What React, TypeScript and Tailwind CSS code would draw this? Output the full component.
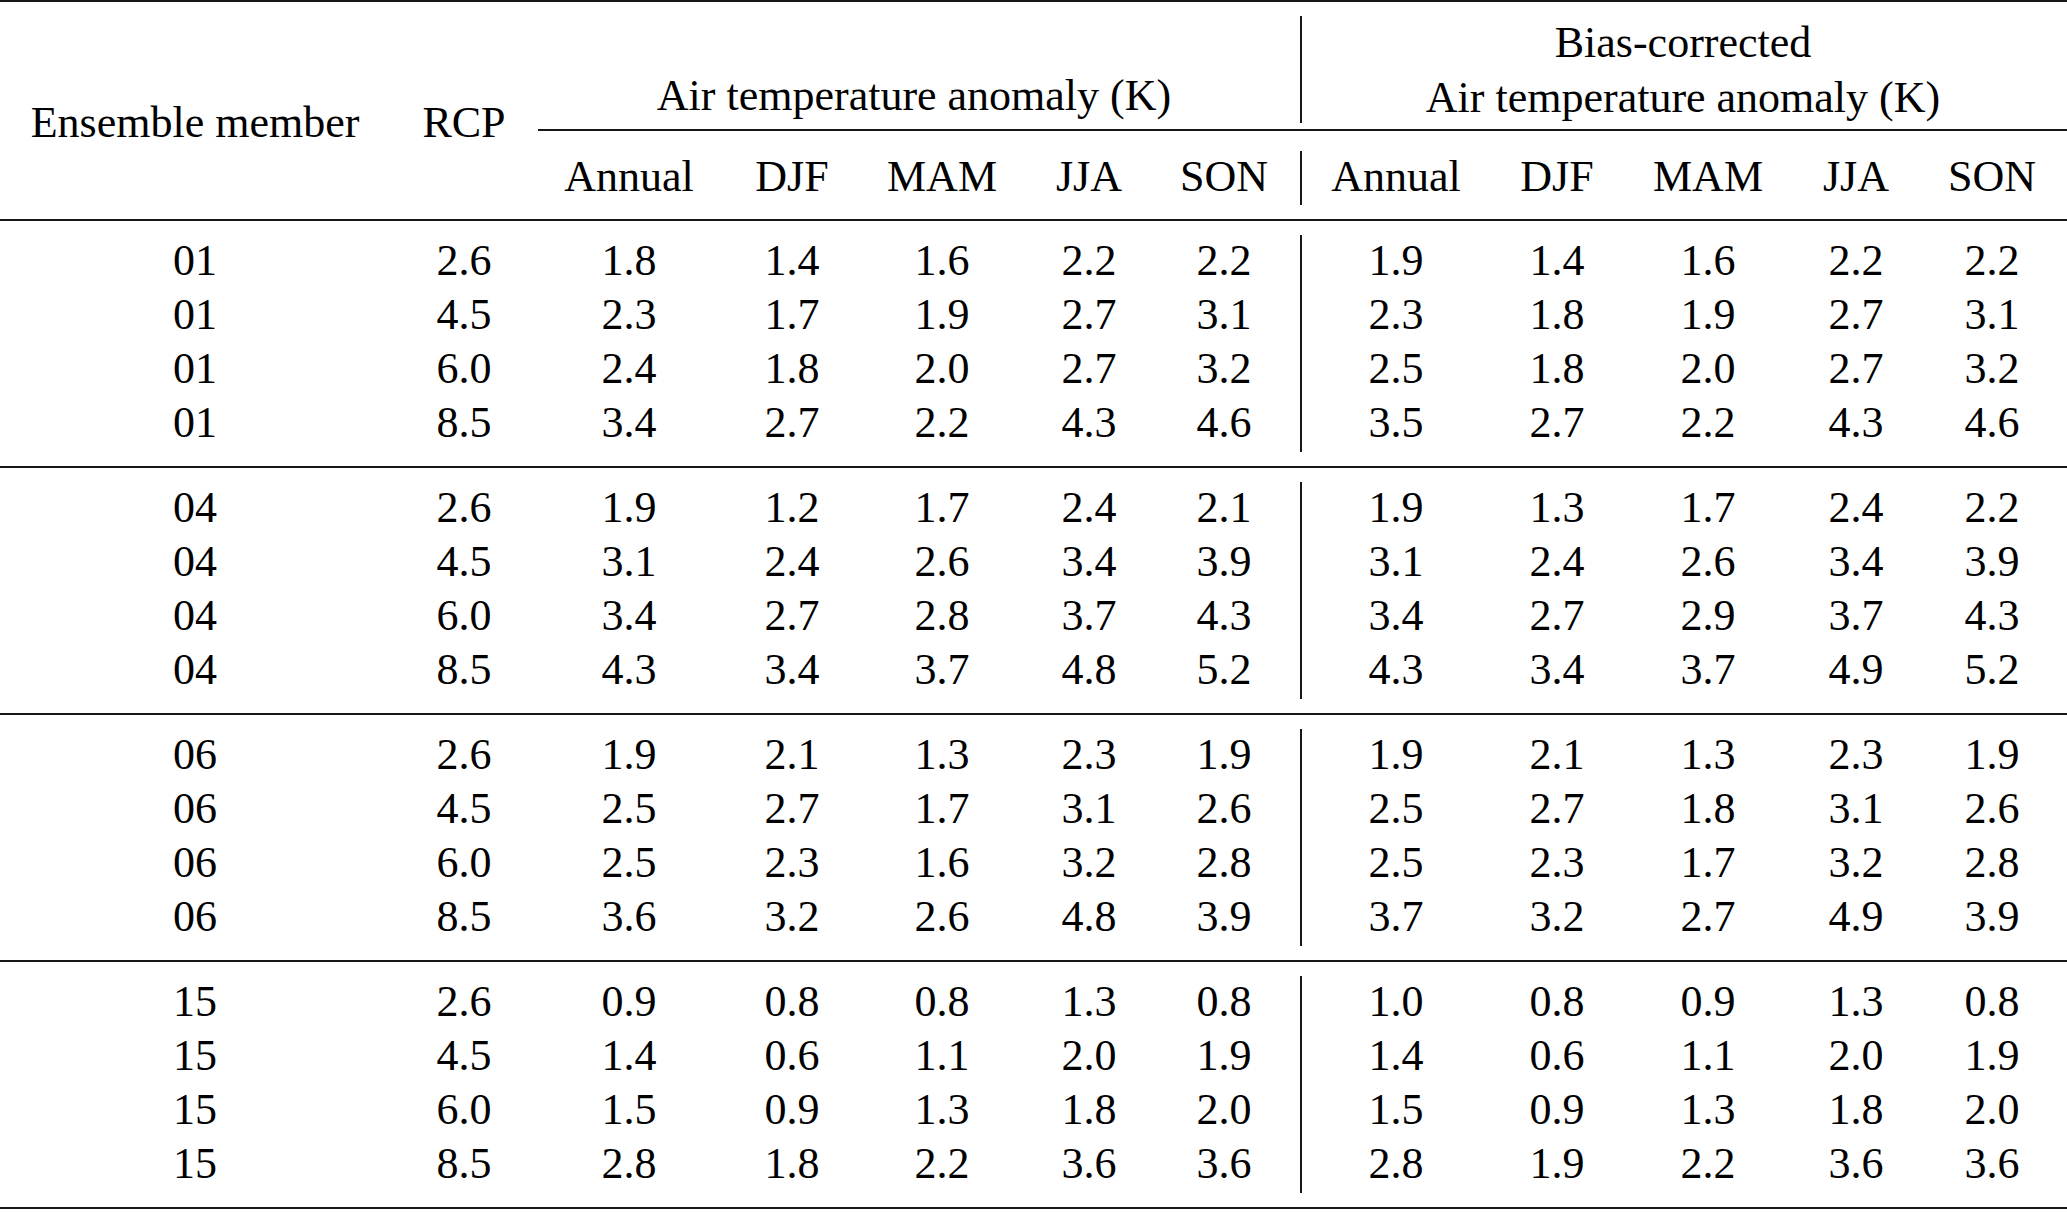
const groups = [
  {
    member: "01",
    rows: [
      ["2.6", "1.8", "1.4", "1.6", "2.2", "2.2", "1.9", "1.4", "1.6", "2.2", "2.2"],
      ["4.5", "2.3", "1.7", "1.9", "2.7", "3.1", "2.3", "1.8", "1.9", "2.7", "3.1"],
      ["6.0", "2.4", "1.8", "2.0", "2.7", "3.2", "2.5", "1.8", "2.0", "2.7", "3.2"],
      ["8.5", "3.4", "2.7", "2.2", "4.3", "4.6", "3.5", "2.7", "2.2", "4.3", "4.6"],
    ],
  },
  {
    member: "04",
    rows: [
      ["2.6", "1.9", "1.2", "1.7", "2.4", "2.1", "1.9", "1.3", "1.7", "2.4", "2.2"],
      ["4.5", "3.1", "2.4", "2.6", "3.4", "3.9", "3.1", "2.4", "2.6", "3.4", "3.9"],
      ["6.0", "3.4", "2.7", "2.8", "3.7", "4.3", "3.4", "2.7", "2.9", "3.7", "4.3"],
      ["8.5", "4.3", "3.4", "3.7", "4.8", "5.2", "4.3", "3.4", "3.7", "4.9", "5.2"],
    ],
  },
  {
    member: "06",
    rows: [
      ["2.6", "1.9", "2.1", "1.3", "2.3", "1.9", "1.9", "2.1", "1.3", "2.3", "1.9"],
      ["4.5", "2.5", "2.7", "1.7", "3.1", "2.6", "2.5", "2.7", "1.8", "3.1", "2.6"],
      ["6.0", "2.5", "2.3", "1.6", "3.2", "2.8", "2.5", "2.3", "1.7", "3.2", "2.8"],
      ["8.5", "3.6", "3.2", "2.6", "4.8", "3.9", "3.7", "3.2", "2.7", "4.9", "3.9"],
    ],
  },
  {
    member: "15",
    rows: [
      ["2.6", "0.9", "0.8", "0.8", "1.3", "0.8", "1.0", "0.8", "0.9", "1.3", "0.8"],
      ["4.5", "1.4", "0.6", "1.1", "2.0", "1.9", "1.4", "0.6", "1.1", "2.0", "1.9"],
      ["6.0", "1.5", "0.9", "1.3", "1.8", "2.0", "1.5", "0.9", "1.3", "1.8", "2.0"],
      ["8.5", "2.8", "1.8", "2.2", "3.6", "3.6", "2.8", "1.9", "2.2", "3.6", "3.6"],
    ],
  },
];

const seasons = ["Annual", "DJF", "MAM", "JJA", "SON"];

function Bar({ className }: { className: string }) {
  return (
    <div className={`w-[22px] flex justify-center ${className}`}>
      <div className="w-[2px] bg-neutral-900" />
    </div>
  );
}

export default function App() {
  return (
    <div className="w-[2067px] bg-white text-black font-['Liberation_Serif',serif] text-[44px] border-t-2 border-neutral-900">
      {/* header */}
      <div className="flex border-b-2 border-neutral-900">
        <div className="w-[390px] flex items-center justify-center pt-[24px]">
          Ensemble member
        </div>
        <div className="w-[148px] flex items-center justify-center pt-[24px]">
          RCP
        </div>
        <div className="flex-1 flex flex-col">
          <div className="flex h-[129px] border-b-2 border-neutral-900">
            <div className="w-[752px] flex items-end justify-center pb-[6px] leading-[55px]">
              Air temperature anomaly (K)
            </div>
            <Bar className="pt-[14px] pb-[6px]" />
            <div className="w-[742px] flex flex-col items-center pt-[13px] leading-[55px]">
              <span>Bias-corrected</span>
              <span>Air temperature anomaly (K)</span>
            </div>
          </div>
          <div className="flex h-[88px]">
            <div className="grid grid-cols-[182px_144px_156px_138px_132px] items-center text-center pt-[4px]">
              {seasons.map((s) => (
                <div key={s}>{s}</div>
              ))}
            </div>
            <Bar className="pt-[20px] pb-[14px]" />
            <div className="grid grid-cols-[168px_154px_148px_148px_124px] items-center text-center pt-[4px]">
              {seasons.map((s) => (
                <div key={s}>{s}</div>
              ))}
            </div>
          </div>
        </div>
      </div>

      {/* data groups */}
      {groups.map((g) => (
        <div key={g.member} className="flex border-b-2 border-neutral-900">
          <div className="grid grid-cols-[390px_148px_182px_144px_156px_138px_132px] auto-rows-[54px] items-center text-center leading-[54px] pt-[13px] pb-[16px]">
            {g.rows.flatMap((r) => [
              <div key={`${g.member}-${r[0]}-m`}>{g.member}</div>,
              ...r.slice(0, 6).map((v, i) => (
                <div key={`${g.member}-${r[0]}-${i}`}>{v}</div>
              )),
            ])}
          </div>
          <Bar className="py-[14px]" />
          <div className="grid grid-cols-[168px_154px_148px_148px_124px] auto-rows-[54px] items-center text-center leading-[54px] pt-[13px] pb-[16px]">
            {g.rows.flatMap((r) =>
              r.slice(6).map((v, i) => (
                <div key={`${g.member}-${r[0]}-b${i}`}>{v}</div>
              ))
            )}
          </div>
        </div>
      ))}
    </div>
  );
}
